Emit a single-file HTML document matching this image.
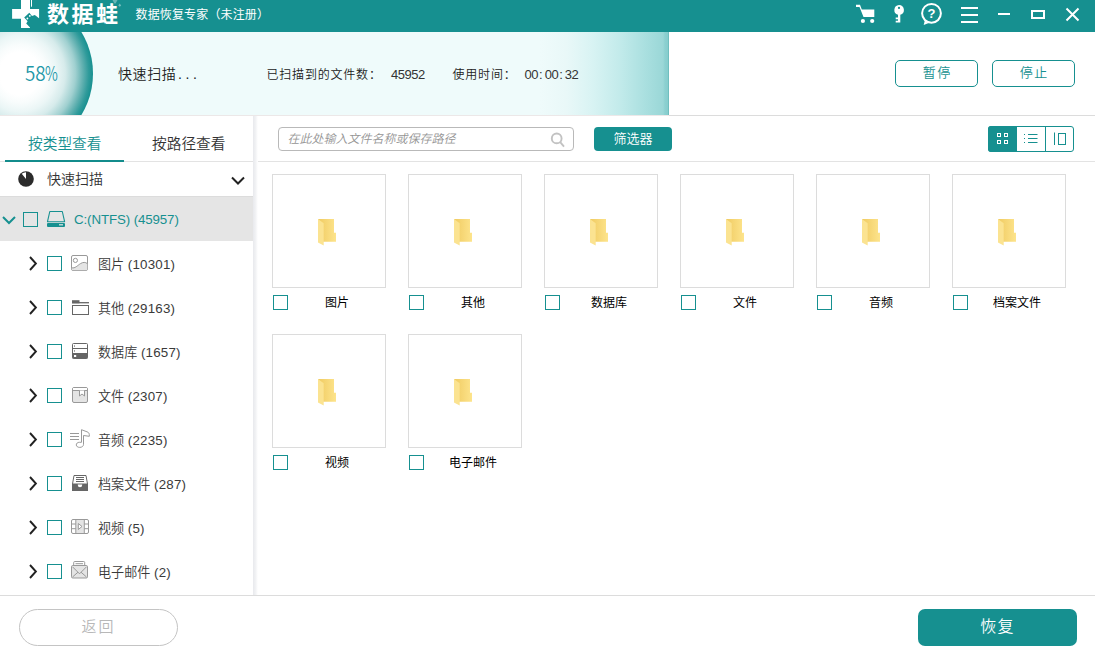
<!DOCTYPE html>
<html lang="zh-CN">
<head>
<meta charset="utf-8">
<title>数据蛙 数据恢复专家</title>
<style>
*{box-sizing:border-box;margin:0;padding:0}
html,body{width:1095px;height:666px;overflow:hidden;background:#fff}
body{position:relative;font-family:"Liberation Sans","Noto Sans CJK SC DemiLight","Noto Sans CJK SC",sans-serif;color:#333;font-size:14px}
.abs{position:absolute}
/* title bar */
#title{left:0;top:0;width:1095px;height:32px;background:#169090}
#brand{font-family:"Liberation Sans","Noto Sans CJK SC",sans-serif;left:47px;top:-.6px;font-size:22px;font-weight:700;color:#fff;letter-spacing:2.5px;line-height:31px;white-space:nowrap}
#sub{left:135.5px;top:1px;font-size:12px;color:#fff;line-height:29px;white-space:nowrap;letter-spacing:.15px;font-family:"Liberation Sans","Noto Sans CJK SC",sans-serif}
/* scan bar */
#scan{left:0;top:32px;width:1095px;height:83px;background:#fff;overflow:hidden}
#prog{left:0;top:0;width:669px;height:83px;background:linear-gradient(90deg,#effbfb 0,#effbfb 540px,#e9f8f8 566px,#d8f3f3 593px,#c3ebeb 619px,#a9dfdf 646px,#9ad7d7 663px,#8bd0d0 665px,#86cccc 668px,#6fbfbf 668px,#6fbfbf 669px)}
#circle{left:-52.8px;top:-35.2px;width:145.6px;height:153.4px;border-radius:50%;background:radial-gradient(ellipse closest-side,#fff 0,#fff 28%,#f8fcfc 38%,#ebf6f6 50%,#d6ebeb 62%,#a0d0d0 76%,#62b1b1 86%,#309b9b 94%,#169090 100%)}
#pct{left:25px;top:29.3px;font-size:20px;color:#1f98a8;line-height:24px;font-weight:300;font-family:"Noto Sans CJK SC DemiLight","Noto Sans CJK SC","Liberation Sans",sans-serif;white-space:nowrap}
.st{font-size:12px;color:#222;white-space:nowrap;line-height:16px;font-weight:300}
.mono{font-family:"Liberation Sans",sans-serif;font-size:13px;letter-spacing:-.5px;font-weight:400;color:#333}
.mono i{font-style:normal;display:inline-block;width:6.7px;text-align:left;padding-left:1px;letter-spacing:0}
#line1{left:0;top:115px;width:1095px;height:1px;background:linear-gradient(90deg,#ece8e8 0,#ece8e8 669px,#dcdcdc 669px)}
.obtn{height:27px;width:83px;border:1px solid #169090;border-radius:5px;color:#169090;font-size:13px;text-align:center;line-height:24px;background:#fff;letter-spacing:1.5px;padding-left:1.5px;font-weight:400}
/* left panel */
#left{left:0;top:116px;width:253px;height:479px;background:#fff}
#vdiv{left:253px;top:116px;width:5px;height:479px;background:linear-gradient(90deg,#e8e9ed 0,#f1f2f4 50%,#fff 100%)}
.tab{font-size:14.7px;line-height:20px;white-space:nowrap;letter-spacing:0}
.cb{width:15px;height:15px;border:1px solid #169090;background:#fff}
.lbl{font-size:13.1px;color:#3a3a3a;white-space:nowrap;line-height:20px}
.lbl b{font-weight:400;font-size:13.33px;letter-spacing:.2px}
/* right panel */
#search{left:278px;top:127px;width:296px;height:24px;border:1px solid #b9b9b9;border-radius:4px;background:#fff}
#search span{position:absolute;left:8.500px;top:2px;font-size:12px;color:#959595;font-style:italic;line-height:18px;white-space:nowrap;font-weight:300}
#filter{left:594px;top:127px;width:78px;height:24px;background:#169090;border-radius:4px;color:#fff;font-size:13px;text-align:center;line-height:24px;font-weight:300}
#line2{left:258px;top:161px;width:837px;height:1px;background:#e3e3e3}
.tile{width:114px;height:114px;border:1px solid #dcdcdc;background:#fff}
.tl{font-size:12px;color:#000;white-space:nowrap;line-height:16px;text-align:center;width:80px;font-family:"Liberation Sans","Noto Sans CJK SC",sans-serif;margin-top:1px}
/* bottom */
#line3{left:0;top:595px;width:1095px;height:1px;background:#dcdcdc}
#back{left:19px;top:609px;width:159px;height:37px;border:1px solid #c4c4c4;border-radius:19px;color:#b8b8b8;font-size:15px;text-align:center;line-height:34px;letter-spacing:2px;font-weight:300}
#rec{left:918px;top:609px;width:159px;height:37px;background:#169090;border-radius:7px;color:#fff;font-size:16px;text-align:center;line-height:36px;letter-spacing:1.2px;font-weight:300}
</style>
</head>
<body>
<!-- TITLE BAR -->
<div id="title" class="abs">
  <svg class="abs" style="left:0;top:0" width="45" height="32" viewBox="0 0 45 32"><path fill="#fff" d="M21 0H30V9H39.100V18.700H30V27.900H21V18.700H12.100V9H21Z"/><rect x="31" y="0" width="1" height="6.700" fill="#fff"/><path fill="#169090" d="M29.300 12.700L24.200 17.500L27.600 21.200L26.200 23.600L30.500 28H40V19L34.800 14.900L32 16Z"/><circle cx="29.800" cy="15.900" r=".9" fill="#fff"/><circle cx="27.400" cy="18.500" r=".9" fill="#fff"/></svg>
  <svg class="abs" style="left:845px;top:0" width="250" height="32" viewBox="845 0 250 32">
    <g fill="#fff" stroke="none">
      <!-- cart -->
      <path d="M856 4.800h4l1.800 4.700h12.500v7.500h-10.800l-4-10.100h-3.500z"/>
      <circle cx="862.9" cy="21" r="2.1"/><circle cx="872.2" cy="21" r="2.1"/>
      <!-- key -->
      <path fill-rule="evenodd" d="M899 5a5 5 0 0 1 1.3 9.8v7.7h-4.6v-1.8h2.3v-1.4h-2.3v-1.8h2.3v-2.7a5 5 0 0 1 1-9.8zM899 6.8a1.1 1.1 0 1 0 0 2.2a1.1 1.1 0 1 0 0-2.2z"/>
    </g>
    <!-- help -->
    <circle cx="931.500" cy="13.300" r="9.400" fill="none" stroke="#fff" stroke-width="2"/>
    <path fill="#fff" d="M925 19.800L923.700 24.900L930 22.400L928.400 21.300L926.300 22.300L926.600 20.300Z"/>
    <text x="931.500" y="17.900" font-family="Liberation Sans, sans-serif" font-weight="bold" font-size="13" fill="#fff" text-anchor="middle">?</text>
    <g fill="#fff">
      <rect x="961" y="7" width="17" height="2"/><rect x="961" y="14" width="17" height="2"/><rect x="961" y="21" width="17" height="2"/>
      <rect x="998" y="13" width="12" height="2"/>
    </g>
    <rect x="1032" y="11" width="12" height="7" fill="none" stroke="#fff" stroke-width="2"/>
    <path d="M1066.5 8.5l12 12M1078.5 8.5l-12 12" stroke="#fff" stroke-width="2" fill="none"/>
  </svg>
  <svg class="abs" style="left:110px;top:0" width="14" height="9" viewBox="110 0 14 9"><path d="M112.500 0H117.500L115.600 3.600H114.400Z" fill="#fff" fill-opacity=".35"/><path d="M118.300 5.500L119.700 3.500L121.200 5.500L119.700 6.800Z" fill="#fff" fill-opacity=".4"/></svg>
  <div id="brand" class="abs">数据蛙</div>
  <div id="sub" class="abs">数据恢复专家（未注册）</div>
</div>
<!-- SCAN BAR -->
<div id="scan" class="abs">
  <div id="prog" class="abs"></div>
  <div id="circle" class="abs"></div>
  <div id="pct" class="abs"><span style="display:inline-block;transform:scaleX(.94);transform-origin:0 0;width:20.3px">58</span><span style="display:inline-block;transform:scaleX(.7);transform-origin:0 0">%</span></div>
  <div class="abs st" style="left:118px;top:33px;font-size:14px;letter-spacing:.6px;line-height:18px">快速扫描<span style="letter-spacing:3.6px;margin-left:1.5px">...</span></div>
  <div class="abs st" style="left:266.5px;top:34.5px;font-size:12px;letter-spacing:.8px">已扫描到的文件数：</div>
  <div class="abs st mono" style="left:391px;top:35px">45952</div>
  <div class="abs st" style="left:452.5px;top:34.5px;font-size:12px;letter-spacing:.8px">使用时间：</div>
  <div class="abs st mono" style="left:524.5px;top:35px">00<i>:</i>00<i>:</i>32</div>
  <div class="abs obtn" style="left:895px;top:28px">暂停</div>
  <div class="abs obtn" style="left:992px;top:28px">停止</div>
</div>
<div id="line1" class="abs"></div>
<!-- LEFT PANEL -->
<div id="left" class="abs"></div>
<div class="abs tab" style="left:28px;top:133.5px;color:#169090">按类型查看</div>
<div class="abs tab" style="left:152px;top:133.5px;color:#333">按路径查看</div>
<div class="abs" style="left:0;top:161px;width:253px;height:1px;background:#e3e3e3"></div>
<div class="abs" style="left:5px;top:160px;width:119px;height:2px;background:#138c8c"></div>
<svg class="abs" style="left:17px;top:170px" width="18" height="18" viewBox="17 170 18 18"><circle cx="26" cy="179" r="7.800" fill="#2b2b2b"/><path d="M26 179V172.200A6.800 6.800 0 0 0 21.700 173.700Z" fill="#fff"/></svg>
<div class="abs" style="left:47px;top:169px;font-size:14px;line-height:20px;color:#333;white-space:nowrap">快速扫描</div>
<svg class="abs" style="left:229px;top:174px" width="18" height="12" viewBox="229 174 18 12"><path d="M232 177.500L238 183.500L244 177.500" fill="none" stroke="#222" stroke-width="2"/></svg>
<div class="abs" style="left:0;top:196px;width:253px;height:45px;background:#e5e5e5;border-top:1px solid #dcdcdc"></div>
<svg class="abs" style="left:0;top:212px" width="20" height="14" viewBox="0 212 20 14"><path d="M3 217L9 223L15 217" fill="none" stroke="#169090" stroke-width="2"/></svg>
<div class="abs cb" style="left:23px;top:212px;background:transparent"></div>
<svg class="abs" style="left:46px;top:210px" width="20" height="18" viewBox="46 210 20 18"><path d="M49.800 211.500H62.300L64.600 221.700H47.500Z" fill="none" stroke="#169090" stroke-width="1.100" stroke-linejoin="round"/><rect x="47" y="223" width="18" height="4" rx="1" fill="#169090"/><rect x="59" y="224.200" width="4" height="1.200" fill="#e5e5e5"/></svg>
<div class="abs lbl" style="left:74px;top:210px;color:#169090;font-size:13.33px;letter-spacing:-.12px">C:(NTFS) (45957)</div>
<svg class="abs" style="left:27px;top:254px" width="12" height="18" viewBox="27 254 12 18"><path d="M30 257.0L35.900 263.5L30 270.0" fill="none" stroke="#222" stroke-width="1.900"/></svg>
<div class="abs cb" style="left:47px;top:256px"></div>
<svg class="abs" style="left:71px;top:255.0px" width="18" height="16" viewBox="0 0 18 16"><rect x="0.5" y="0.5" width="16" height="15" rx="1.5" fill="#fff" stroke="#999"/><path d="M0.8 12.8C4 13.6 6.5 10.5 9.5 8.6C12 7 14.5 7 16.3 8.6V14.2Q16.3 15.2 15.3 15.2H1.8Q0.8 15.2 0.8 14.2Z" fill="#e4e4e4"/><path d="M0.8 12.8C4 13.6 6.5 10.5 9.5 8.6C12 7 14.5 7 16.3 8.6" fill="none" stroke="#999"/><circle cx="4.4" cy="5.4" r="2.1" fill="none" stroke="#999"/></svg>
<div class="abs lbl" style="left:98px;top:254.5px">图片 <b>(10301)</b></div>
<svg class="abs" style="left:27px;top:298px" width="12" height="18" viewBox="27 298 12 18"><path d="M30 301.0L35.900 307.5L30 314.0" fill="none" stroke="#222" stroke-width="1.900"/></svg>
<div class="abs cb" style="left:47px;top:300px"></div>
<svg class="abs" style="left:71px;top:300.0px" width="19" height="15" viewBox="0 0 19 15"><path d="M1 0.200H8.500V3.300H1Z" fill="#666"/><path d="M1 2.700H18" stroke="#666" stroke-width="1.300"/><rect x="1.5" y="5.5" width="16" height="9" fill="#fff" stroke="#666"/></svg>
<div class="abs lbl" style="left:98px;top:298.5px">其他 <b>(29163)</b></div>
<svg class="abs" style="left:27px;top:342px" width="12" height="18" viewBox="27 342 12 18"><path d="M30 345.0L35.900 351.5L30 358.0" fill="none" stroke="#222" stroke-width="1.900"/></svg>
<div class="abs cb" style="left:47px;top:344px"></div>
<svg class="abs" style="left:70.5px;top:343.0px" width="18" height="16" viewBox="0 0 18 16"><rect x="1.5" y="0.5" width="15" height="15" rx="1" fill="#fff" stroke="#666"/><path d="M1.5 5.5H16.5" stroke="#666"/><path d="M1.5 10H16.5V15Q16.5 15.5 16 15.5H2Q1.5 15.500 1.5 15Z" fill="#666"/><rect x="3" y="2.300" width="1" height="1.5" fill="#888"/><rect x="3" y="7.200" width="1" height="1.5" fill="#888"/><rect x="3" y="12" width="2.200" height="2" fill="#fff"/></svg>
<div class="abs lbl" style="left:98px;top:342.5px">数据库 <b>(1657)</b></div>
<svg class="abs" style="left:27px;top:386px" width="12" height="18" viewBox="27 386 12 18"><path d="M30 389.0L35.900 395.5L30 402.0" fill="none" stroke="#222" stroke-width="1.900"/></svg>
<div class="abs cb" style="left:47px;top:388px"></div>
<svg class="abs" style="left:70.5px;top:387.0px" width="18" height="16" viewBox="0 0 18 16"><rect x="1.500" y="0.5" width="15" height="15" rx="1.500" fill="#e4e4e4" stroke="#999"/><path d="M2 1H16V3.500H2Z" fill="#fff"/><path d="M1.500 3.500H16.500" stroke="#999"/><path d="M8.500 3.500V9L11 7L13.500 9V3.500" fill="#fff" stroke="#999"/></svg>
<div class="abs lbl" style="left:98px;top:386.5px">文件 <b>(2307)</b></div>
<svg class="abs" style="left:27px;top:430px" width="12" height="18" viewBox="27 430 12 18"><path d="M30 433.0L35.900 439.5L30 446.0" fill="none" stroke="#222" stroke-width="1.900"/></svg>
<div class="abs cb" style="left:47px;top:432px"></div>
<svg class="abs" style="left:70px;top:428.8px" width="20" height="19" viewBox="0 0 20 19"><path d="M0 4.500H9M0 7.500H9M0 10.500H9" stroke="#999"/><path d="M11.500 0.700V13.300H9.500C7.500 13.300 6.300 14.400 6.300 15.900C6.300 17.400 7.800 18.400 9.700 18.400C11.900 18.400 13.500 17.200 13.500 15.400V6.500L19.300 7.300V5.600C19.300 4.200 18.500 3.400 17 2.800Z" fill="#fff" stroke="#999" stroke-linejoin="round"/></svg>
<div class="abs lbl" style="left:98px;top:430.5px">音频 <b>(2235)</b></div>
<svg class="abs" style="left:27px;top:474px" width="12" height="18" viewBox="27 474 12 18"><path d="M30 477.0L35.900 483.5L30 490.0" fill="none" stroke="#222" stroke-width="1.900"/></svg>
<div class="abs cb" style="left:47px;top:476px"></div>
<svg class="abs" style="left:71px;top:474.5px" width="18" height="17" viewBox="0 0 18 17"><path d="M3 0.500H15L16.500 9H1.500Z" fill="#fff" stroke="#666"/><path d="M5 2.500H13M5 4.500H13M5 6.500H13" stroke="#666"/><path d="M1 9H6.800V10Q6.800 12.300 9 12.300Q11.200 12.300 11.200 10V9H17V16H1Z" fill="#666"/></svg>
<div class="abs lbl" style="left:98px;top:474.5px">档案文件 <b>(287)</b></div>
<svg class="abs" style="left:27px;top:518px" width="12" height="18" viewBox="27 518 12 18"><path d="M30 521.0L35.900 527.5L30 534.0" fill="none" stroke="#222" stroke-width="1.900"/></svg>
<div class="abs cb" style="left:47px;top:520px"></div>
<svg class="abs" style="left:71px;top:519.0px" width="18" height="15" viewBox="0 0 18 15"><rect x="0.500" y="0.500" width="17" height="14" rx="1.500" fill="#fff" stroke="#999"/><rect x="5" y="1" width="8" height="13" fill="#e4e4e4"/><path d="M4.800 0.500V14.500M13.300 0.500V14.500M0.500 5H4.800M0.500 9.700H4.800M13.300 5H17.500M13.300 9.700H17.500" stroke="#999" fill="none"/><path d="M7.300 4.500V10.500L11 7.500Z" fill="#fff" stroke="#999" stroke-linejoin="round"/></svg>
<div class="abs lbl" style="left:98px;top:518.5px">视频 <b>(5)</b></div>
<svg class="abs" style="left:27px;top:562px" width="12" height="18" viewBox="27 562 12 18"><path d="M30 565.0L35.900 571.5L30 578.0" fill="none" stroke="#222" stroke-width="1.900"/></svg>
<div class="abs cb" style="left:47px;top:564px"></div>
<svg class="abs" style="left:71px;top:561.3px" width="18" height="18" viewBox="0 0 18 18"><rect x="2.700" y="0.500" width="11" height="5" rx="1" fill="#fff" stroke="#999"/><path d="M4.500 2.700H12" stroke="#999"/><rect x="0.500" y="4.500" width="16" height="12.500" rx="1.200" fill="#e4e4e4" stroke="#999"/><path d="M1.500 5.800L8.500 12.800L15.500 5.800M1.500 16L7 11.200M15.500 16L10 11.200" fill="none" stroke="#999"/></svg>
<div class="abs lbl" style="left:98px;top:562.5px">电子邮件 <b>(2)</b></div>
<div id="vdiv" class="abs"></div>
<!-- RIGHT PANEL -->
<div id="search" class="abs"><span>在此处输入文件名称或保存路径</span><svg class="abs" style="left:270px;top:3px" width="18" height="18" viewBox="549 130 18 18"><circle cx="556.700" cy="137.400" r="4.900" fill="none" stroke="#c2c2c2" stroke-width="1.900"/><path d="M560.200 141.200L564 145.600" stroke="#c2c2c2" stroke-width="1.900"/></svg></div>
<div id="filter" class="abs">筛选器</div>
<div id="line2" class="abs"></div>
<div class="abs" style="left:988px;top:126px;width:86px;height:26px;border:1px solid #169090;border-radius:3px;background:#fff"></div>
<div class="abs" style="left:988px;top:126px;width:29px;height:26px;background:#169090;border-radius:3px 0 0 3px"></div>
<div class="abs" style="left:1045px;top:126px;width:1px;height:26px;background:#169090"></div>
<svg class="abs" style="left:988px;top:126px" width="86" height="26" viewBox="988 126 86 26"><g fill="none" stroke="#fff"><rect x="997.500" y="133.500" width="3" height="3"/><rect x="1004.500" y="133.500" width="3" height="3"/><rect x="997.500" y="140.500" width="3" height="3"/><rect x="1004.500" y="140.500" width="3" height="3"/></g><g stroke="#169090" fill="none"><path d="M1024 134.500H1025M1024 138.500H1025M1024 142.500H1025M1028 134.500H1037.500M1028 138.500H1037.500M1028 142.500H1037.500M1054.500 132.500V145"/><rect x="1058.500" y="133.500" width="7" height="11"/></g></svg>
<div class="abs tile" style="left:272px;top:174px"><svg class="abs" style="left:44px;top:42px" width="22" height="30" viewBox="317 217 22 30"><defs><linearGradient id="fg" x1="0" x2="1" y1="0" y2="0"><stop offset="0" stop-color="#f0cb62"/><stop offset="1" stop-color="#fde48c"/></linearGradient></defs><path d="M318.200 219H334V232.700H336V241.700H318.200Z" fill="url(#fg)"/><path d="M318 219L323.700 223.300V245.600L318 242.600Z" fill="#fbe391"/></svg></div>
<div class="abs cb" style="left:273px;top:295px"></div>
<div class="abs tl" style="left:297px;top:294px">图片</div>
<div class="abs tile" style="left:408px;top:174px"><svg class="abs" style="left:44px;top:42px" width="22" height="30" viewBox="317 217 22 30"><path d="M318.200 219H334V232.700H336V241.700H318.200Z" fill="url(#fg)"/><path d="M318 219L323.700 223.300V245.600L318 242.600Z" fill="#fbe391"/></svg></div>
<div class="abs cb" style="left:409px;top:295px"></div>
<div class="abs tl" style="left:433px;top:294px">其他</div>
<div class="abs tile" style="left:544px;top:174px"><svg class="abs" style="left:44px;top:42px" width="22" height="30" viewBox="317 217 22 30"><path d="M318.200 219H334V232.700H336V241.700H318.200Z" fill="url(#fg)"/><path d="M318 219L323.700 223.300V245.600L318 242.600Z" fill="#fbe391"/></svg></div>
<div class="abs cb" style="left:545px;top:295px"></div>
<div class="abs tl" style="left:569px;top:294px">数据库</div>
<div class="abs tile" style="left:680px;top:174px"><svg class="abs" style="left:44px;top:42px" width="22" height="30" viewBox="317 217 22 30"><path d="M318.200 219H334V232.700H336V241.700H318.200Z" fill="url(#fg)"/><path d="M318 219L323.700 223.300V245.600L318 242.600Z" fill="#fbe391"/></svg></div>
<div class="abs cb" style="left:681px;top:295px"></div>
<div class="abs tl" style="left:705px;top:294px">文件</div>
<div class="abs tile" style="left:816px;top:174px"><svg class="abs" style="left:44px;top:42px" width="22" height="30" viewBox="317 217 22 30"><path d="M318.200 219H334V232.700H336V241.700H318.200Z" fill="url(#fg)"/><path d="M318 219L323.700 223.300V245.600L318 242.600Z" fill="#fbe391"/></svg></div>
<div class="abs cb" style="left:817px;top:295px"></div>
<div class="abs tl" style="left:841px;top:294px">音频</div>
<div class="abs tile" style="left:952px;top:174px"><svg class="abs" style="left:44px;top:42px" width="22" height="30" viewBox="317 217 22 30"><path d="M318.200 219H334V232.700H336V241.700H318.200Z" fill="url(#fg)"/><path d="M318 219L323.700 223.300V245.600L318 242.600Z" fill="#fbe391"/></svg></div>
<div class="abs cb" style="left:953px;top:295px"></div>
<div class="abs tl" style="left:977px;top:294px">档案文件</div>
<div class="abs tile" style="left:272px;top:334px"><svg class="abs" style="left:44px;top:42px" width="22" height="30" viewBox="317 217 22 30"><path d="M318.200 219H334V232.700H336V241.700H318.200Z" fill="url(#fg)"/><path d="M318 219L323.700 223.300V245.600L318 242.600Z" fill="#fbe391"/></svg></div>
<div class="abs cb" style="left:273px;top:455px"></div>
<div class="abs tl" style="left:297px;top:454px">视频</div>
<div class="abs tile" style="left:408px;top:334px"><svg class="abs" style="left:44px;top:42px" width="22" height="30" viewBox="317 217 22 30"><path d="M318.200 219H334V232.700H336V241.700H318.200Z" fill="url(#fg)"/><path d="M318 219L323.700 223.300V245.600L318 242.600Z" fill="#fbe391"/></svg></div>
<div class="abs cb" style="left:409px;top:455px"></div>
<div class="abs tl" style="left:433px;top:454px">电子邮件</div>
<!-- BOTTOM -->
<div id="line3" class="abs"></div>
<div id="back" class="abs">返回</div>
<div id="rec" class="abs">恢复</div>
</body>
</html>
